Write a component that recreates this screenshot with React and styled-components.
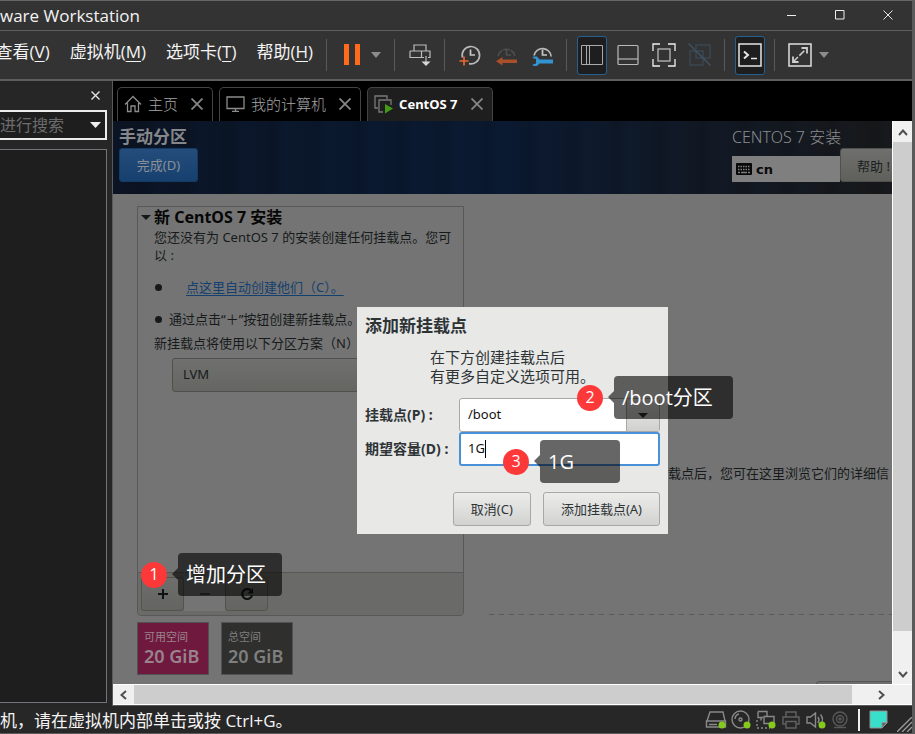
import React from "react";
import styled, { createGlobalStyle, css } from "styled-components";

const Global = createGlobalStyle`
  *, *::before, *::after { box-sizing: border-box; }
  body { margin: 0; background: #2a2a2a; }
  button, input, select { font: inherit; color: inherit; margin: 0; }
  button { padding: 0; border: 0; background: none; cursor: pointer; }
  svg { display: block; flex: none; }
`;

const uiFont = `"Open Sans", "Noto Sans CJK SC", sans-serif`;
const guestFont = `"Noto Sans", "Noto Sans CJK SC", sans-serif`;

const Window = styled.div`
  min-height: 100vh;
  display: flex;
  flex-direction: column;
  overflow: hidden;
  font-family: ${uiFont};
  color: #f4f4f4;
  background: #262626;
  border-top: 1px solid #666;
  border-right: 3px solid #5a5a5a;
  border-bottom: 1px solid #5a5a5a;
`;

/* ---------- title bar and toolbar ---------- */

const TitleBar = styled.header`
  height: 30px;
  display: flex;
  align-items: center;
  justify-content: space-between;
  background: #333;
  border-bottom: 1px solid #5e5e5e;
`;
const Title = styled.h1`
  margin: 0;
  font-size: 17px;
  line-height: 28px;
  font-weight: 400;
  white-space: nowrap;
`;
const WindowControls = styled.div`
  display: flex;
  padding-bottom: 2px;
`;
const WindowButton = styled.button`
  width: 48px;
  height: 27px;
  display: grid;
  place-items: center;
`;

const Toolbar = styled.div`
  height: 50px;
  display: flex;
  align-items: center;
  background: #333;
  border-bottom: 2px solid #5e5e5e;
`;
const MenuBar = styled.nav`
  width: 320px;
  flex: none;
  height: 48px;
  padding: 0 7px 6px 0;
  display: flex;
  align-items: center;
  justify-content: flex-end;
  gap: 20px;
  overflow: hidden;
`;
const MenuButton = styled.button`
  flex: none;
  font-size: 17px;
  line-height: 24px;
  white-space: nowrap;
  u { text-underline-offset: 3px; text-decoration-thickness: 1px; }
`;
const Separator = styled.span`
  width: 1px;
  height: 32px;
  margin: 0 7px 0 6px;
  flex: none;
  background: #5a5a5a;
`;
const Tool = styled.button`
  width: ${(p) => (p.$pressed ? 30 : 36)}px;
  height: 39px;
  margin: 0 ${(p) => (p.$pressed ? 3 : 0)}px;
  flex: none;
  display: grid;
  place-items: center;
  ${(p) =>
    p.$pressed &&
    css`
      background: #1e1e1e;
      border: 1px solid #26608f;
      border-radius: 3px;
    `}
`;
const ToolMenu = styled.button`
  width: 12px;
  height: 32px;
  margin-right: ${(p) => (p.$last ? 0 : 6)}px;
  flex: none;
  display: grid;
  place-items: center;
`;

/* ---------- body ---------- */

const Body = styled.div`
  flex: 1;
  display: flex;
`;
const Sidebar = styled.aside`
  width: 112px;
  flex: none;
  display: flex;
  flex-direction: column;
  padding: 0 5px 3px 0;
  background: #262626;
`;
const SidebarTop = styled.div`
  height: 29px;
  display: flex;
  justify-content: flex-end;
  align-items: center;
`;
const SidebarClose = styled.button`
  width: 24px;
  height: 28px;
  display: grid;
  place-items: center;
`;
const SearchBox = styled.div`
  height: 30px;
  display: flex;
  align-items: center;
  background: #1e1e1e;
  border: 2px solid #ececec;
  border-left: 0;
`;
const SearchInput = styled.input`
  flex: 1;
  min-width: 0;
  height: 26px;
  padding: 0;
  border: 0;
  outline: 0;
  background: transparent;
  font-size: 16px;
  &::placeholder { color: #6c6c6c; opacity: 1; }
`;
const SearchDrop = styled.button`
  width: 20px;
  height: 26px;
  display: grid;
  place-items: center;
`;
const Library = styled.div`
  flex: 1;
  margin-top: 9px;
  background: #1e1e1e;
  border: 1px solid #74747a;
  border-left: 0;
`;

const Main = styled.main`
  flex: 1;
  min-width: 0;
  display: flex;
  flex-direction: column;
  border-left: 1px solid #5a5a5a;
  border-bottom: 1px solid #5a5a5a;
`;
const TabStrip = styled.div`
  height: 40px;
  padding: 6px 4px 0;
  display: flex;
  gap: 6px;
  background: #000;
`;
const Tab = styled.div`
  height: 34px;
  padding: 0 7px 2px 6px;
  display: flex;
  align-items: center;
  gap: 6px;
  border: 1px solid #444;
  border-bottom: 0;
  border-radius: 5px 5px 0 0;
  background: ${(p) => (p.$active ? "#1e1e1e" : "#000")};
`;
const TabLabel = styled.button`
  display: flex;
  align-items: center;
  gap: 6px;
  font-size: ${(p) => (p.$active ? 13 : 15)}px;
  line-height: 24px;
  font-weight: ${(p) => (p.$active ? 700 : 300)};
  font-family: ${guestFont};
  color: ${(p) => (p.$active ? "#fff" : "#a5a5a5")};
  white-space: nowrap;
`;
const TabClose = styled.button`
  width: 16px;
  height: 20px;
  margin-left: 5px;
  display: grid;
  place-items: center;
`;

const Viewport = styled.div`
  flex: 1;
  display: flex;
`;
const Guest = styled.section`
  position: relative;
  flex: 1;
  min-width: 0;
  display: flex;
  flex-direction: column;
  overflow: hidden;
  font-family: ${guestFont};
  color: #161a1a;
  background: #747474;
`;

/* ---------- installer header ---------- */

const InstallerHeader = styled.div`
  height: 73px;
  flex: none;
  padding-left: 6px;
  display: flex;
  justify-content: space-between;
  background:
    repeating-linear-gradient(90deg, rgba(20, 50, 90, 0.05), transparent 17px, rgba(0, 0, 0, 0.08) 31px, rgba(20, 50, 90, 0.05) 43px),
    linear-gradient(90deg, #0b1322 0%, #0a182d 30%, #0a1930 50%, #111824 75%, #171819 100%);
`;
const HeaderLeft = styled.div`
  display: flex;
  flex-direction: column;
  align-items: flex-start;
  padding-top: 4px;
`;
const PageTitle = styled.h2`
  margin: 0;
  font-size: 17px;
  line-height: 23px;
  font-weight: 700;
  color: #85878a;
`;
const DoneButton = styled.button`
  width: 79px;
  height: 34px;
  padding-bottom: 2px;
  border: 1px solid #153a63;
  border-radius: 3px;
  background: linear-gradient(#254d7b, #16406f);
  font-size: 13px;
  color: #8b9097;
`;
const HeaderRight = styled.div`
  width: 160px;
  flex: none;
  padding-top: 6px;
`;
const ProductName = styled.div`
  font-size: 16px;
  line-height: 21px;
  font-weight: 300;
  color: #8a8c8f;
  white-space: nowrap;
`;
const HeaderTools = styled.div`
  display: flex;
  align-items: flex-end;
`;
const LayoutBox = styled.button`
  width: 108px;
  height: 26px;
  padding-left: 4px;
  flex: none;
  display: flex;
  align-items: center;
  gap: 4px;
  background: #7f7f7f;
  color: #0a0a0a;
  font: 700 13px "DejaVu Sans", sans-serif;
`;
const HelpButton = styled.button`
  width: 76px;
  height: 34px;
  padding-left: 16px;
  flex: none;
  border: 1px solid #50504e;
  border-radius: 3px;
  background: linear-gradient(#6f6f6d, #5f5f5c);
  color: #1b1f20;
  font-size: 13px;
  text-align: left;
  white-space: nowrap;
`;

/* ---------- partition page ---------- */

const Page = styled.div`
  flex: 1;
  display: flex;
  gap: 25px;
  padding: 12px 0 9px 24px;
`;
const LeftColumn = styled.div`
  width: 327px;
  flex: none;
  display: flex;
  flex-direction: column;
  gap: 6px;
`;
const PartitionPanel = styled.section`
  flex: 1;
  display: flex;
  flex-direction: column;
  border: 1px solid #585858;
  border-radius: 0 0 4px 4px;
`;
const PanelContent = styled.div`
  flex: 1;
  padding: 0 6px 0 16px;
  font-size: 13px;
  line-height: 18px;
`;
const PanelHeading = styled.h3`
  margin: 0 0 0 -13px;
  display: flex;
  align-items: center;
  gap: 3px;
  font-size: 16px;
  line-height: 21px;
  font-weight: 700;
  color: #060606;
`;
const Paragraph = styled.p`
  margin: 0;
`;
const Steps = styled.ul`
  list-style: none;
  margin: 14px 0 6px;
  padding: 0;
`;
const Step = styled.li`
  display: flex;
  align-items: center;
  gap: ${(p) => (p.$indented ? 24 : 7)}px;
  padding-left: 1px;
  white-space: nowrap;
  & + & { margin-top: 14px; }
  &::before {
    content: "";
    width: 7px;
    height: 7px;
    border-radius: 50%;
    background: #16191a;
  }
`;
const StepLink = styled.a`
  color: #14406f;
  text-underline-offset: 3px;
`;
const SchemeSelect = styled.select`
  display: block;
  width: 274px;
  height: 34px;
  margin: 6px 0 0 18px;
  padding: 0 10px 2px;
  appearance: none;
  border: 1px solid #4f4f4d;
  border-radius: 3px;
  background: linear-gradient(#70706e, #656562);
  font-size: 13px;
`;
const PanelActions = styled.div`
  height: 43px;
  padding: 4px 3px;
  display: flex;
  background: #6a6a68;
  border-top: 1px solid #585858;
  border-radius: 0 0 4px 4px;
`;
const PanelAction = styled.button`
  width: ${(p) => (p.disabled ? 41 : 43)}px;
  height: 34px;
  display: grid;
  place-items: center;
  background: ${(p) => (p.disabled ? "#747474" : "linear-gradient(#6e6e6c, #646461)")};
  border: ${(p) => (p.disabled ? 0 : 1)}px solid #53534f;
  border-radius: ${(p) => (p.disabled ? 0 : 3)}px;
`;
const SpaceTiles = styled.div`
  display: flex;
  gap: 12px;
`;
const SpaceTile = styled.div`
  width: 72px;
  height: 53px;
  padding: 5px 0 0 6px;
  border: 1px solid #525252;
  background: ${(p) => (p.$available ? "#70193f" : "#2f2f2d")};
  color: ${(p) => (p.$available ? "#99838d" : "#7f7f7f")};
  font-size: 11px;
  line-height: 18px;
  white-space: nowrap;
  strong { display: block; font: 600 18px/20px ${guestFont}; }
`;
const RightColumn = styled.div`
  flex: 1;
  min-width: 0;
  display: flex;
  flex-direction: column;
`;
const EmptyState = styled.div`
  flex: 1;
  padding: 124px 3px 0 0;
  display: flex;
  align-items: center;
  justify-content: flex-end;
  background: repeating-linear-gradient(90deg, #5a5a5a 0 5px, transparent 5px 10px) left bottom / 100% 1px no-repeat;
  font-size: 13px;
  line-height: 18px;
  white-space: nowrap;
`;
const ResetArea = styled.div`
  height: 60px;
  display: flex;
  justify-content: flex-end;
  align-items: flex-end;
`;
const ResetButton = styled.button`
  width: 80px;
  height: 34px;
  margin: 0 -4px -40px 0;
  flex: none;
  border: 1px solid #555;
  border-radius: 3px;
  background: #6e6e6c;
`;

/* ---------- dialog ---------- */

const Dialog = styled.form`
  position: absolute;
  left: 244px;
  top: 186px;
  width: 311px;
  padding: 7px 8px 8px;
  background: #e8e8e6;
  color: #2e3436;
`;
const DialogTitle = styled.h2`
  margin: 0;
  font-size: 17px;
  line-height: 23px;
  font-weight: 700;
`;
const DialogText = styled.p`
  margin: 11px 0 12px 65px;
  font-size: 15px;
  line-height: 19px;
`;
const FormGrid = styled.div`
  display: grid;
  grid-template-columns: 94px 1fr;
  align-items: center;
`;
const FormLabel = styled.label`
  font-size: 14px;
  line-height: 20px;
  font-weight: 700;
  white-space: nowrap;
`;
const Combo = styled.div`
  height: 34px;
  display: flex;
  border: 1px solid #a8a8a6;
  border-radius: 3px;
  background: #fff;
`;
const SizeField = styled.div`
  height: 34px;
  display: flex;
  align-items: center;
  border: 2px solid #4a90d9;
  border-radius: 3px;
  background: #fff;
`;
const FieldInput = styled.input`
  width: ${(p) => (p.$short ? 24 : 166)}px;
  min-width: 0;
  padding: 0 0 2px ${(p) => (p.$short ? 7 : 8)}px;
  border: 0;
  outline: 0;
  background: transparent;
  caret-color: transparent;
  font-size: 13px;
  color: #111;
`;
const Caret = styled.span`
  width: 1px;
  height: 18px;
  background: #000;
`;
const ComboButton = styled.button`
  width: 33px;
  margin-left: auto;
  display: grid;
  place-items: center;
  border-left: 1px solid #a8a8a6;
  background: linear-gradient(#ececeb, #d0d0ce);
`;
const DialogActions = styled.div`
  margin-top: 26px;
  display: flex;
  justify-content: flex-end;
  gap: 12px;
`;
const DialogButton = styled.button`
  height: 34px;
  padding: 0 17px 2px;
  border: 1px solid #a8a8a6;
  border-radius: 3px;
  background: linear-gradient(#ececeb, #d2d2d0);
  font-size: 13px;
`;

/* ---------- annotations over the guest ---------- */

const Annotation = styled.div`
  position: absolute;
  left: ${(p) => p.$x}px;
  top: ${(p) => p.$y}px;
  display: flex;
  align-items: center;
  gap: 11px;
  color: #fff;
  font-family: ${uiFont};
`;
const Marker = styled.span`
  width: 26px;
  height: 26px;
  border-radius: 50%;
  background: #fd3838;
  font-size: 16px;
  line-height: 24px;
  text-align: center;
`;
const Callout = styled.span`
  position: relative;
  min-width: ${(p) => p.$width}px;
  height: 43px;
  padding: 0 8px;
  border-radius: 4px;
  background: rgba(0, 0, 0, 0.6);
  font-size: 20px;
  line-height: 43px;
  white-space: nowrap;
  &::before {
    content: "";
    position: absolute;
    left: -6px;
    top: 15px;
    border: solid transparent;
    border-width: 6px 6px 6px 0;
    border-right-color: rgba(0, 0, 0, 0.6);
  }
`;

/* ---------- scroll bars ---------- */

const ScrollBar = styled.div`
  flex: none;
  display: flex;
  background: #f0f0f0;
  ${(p) =>
    p.$vertical
      ? css`width: 20px; flex-direction: column; border-left: 1px solid #fff;`
      : css`height: 21px; border-top: 1px solid #fff; border-bottom: 1px solid #fff;`}
`;
const ScrollButton = styled.button`
  width: ${(p) => (p.$vertical ? 19 : 21)}px;
  height: ${(p) => (p.$vertical ? 21 : 19)}px;
  flex: none;
  display: grid;
  place-items: center;
`;
const ScrollThumb = styled.div`
  flex: 1;
  background: #cdcdcd;
  ${(p) => (p.$vertical ? css`margin-bottom: 32px;` : css`margin-right: 18px;`)}
`;
const ScrollCorner = styled.span`
  width: 21px;
`;

/* ---------- status bar ---------- */

const StatusBar = styled.footer`
  height: 27px;
  display: flex;
  align-items: center;
  background: #272727;
`;
const StatusText = styled.span`
  flex: 1;
  padding-top: 2px;
  font-size: 17px;
  line-height: 24px;
  white-space: nowrap;
`;
const Devices = styled.div`
  display: flex;
  gap: 3px;
`;
const Device = styled.button`
  width: 22px;
  height: 22px;
  display: grid;
  place-items: center;
`;
const StatusDivider = styled.span`
  width: 2px;
  height: 22px;
  margin: 0 9px 0 6px;
  background: #f0f0f0;
`;
const Grip = styled.span`
  margin: 10px 0 0 9px;
`;

/* ---------- icons ---------- */

const Svg = ({ w, h = w, color = "#b9b9b9", sw = 1, children }) => (
  <svg width={w} height={h} viewBox={`0 0 ${w} ${h}`} fill="none" stroke={color} strokeWidth={sw} aria-hidden="true">
    {children}
  </svg>
);
const Down = ({ color = "#8d8d8d", w = 10, h = 6 }) => (
  <Svg w={w} h={h} color="none"><path d={`M0 0H${w}L${w / 2} ${h}Z`} fill={color} /></Svg>
);
const Cross = ({ size = 10, color = "#e8e8e8", sw = 1 }) => (
  <Svg w={size} color={color} sw={sw}><path d={`M.5 .5L${size - 0.5} ${size - 0.5}M${size - 0.5} .5L.5 ${size - 0.5}`} /></Svg>
);
const Chevron = ({ d, w = 10, h = 10 }) => <Svg w={w} h={h} color="#505050" sw={2}><path d={d} /></Svg>;
const Dot = () => <circle cx="17" cy="16" r="3.5" fill="#84c91c" stroke="none" />;

const PauseIcon = () => (
  <Svg w={16} h={22} color="none"><path d="M0 0h5v21H0zM11 0h5v21h-5z" fill="#ff6a1c" /></Svg>
);
const SendIcon = () => (
  <Svg w={22} h={24} sw={1.2} color="#bcbcbc">
    <path d="M5 8V2h12v6M1 8h20v6.500h-2M15 14.500H1V8M12.500 8v6.500" />
    <path d="M17 13v7" sw={2} /><path d="M12.500 18.500h9L17 23z" fill="#d5d5d5" stroke="none" />
  </Svg>
);
const ClockAdd = () => (
  <Svg w={22} sw={1.7}>
    <path d="M3.500 13.500A8.700 8.700 0 1 1 10 19.700" /><path d="M11.500 5.500v5.500H16" stroke="#c8c8c8" />
    <path d="M5 12.500v9M.5 17h9" stroke="#e8682d" />
  </Svg>
);
const ClockBack = () => (
  <Svg w={22} color="#505050" sw={1.5}>
    <path d="M3 12A8.700 8.700 0 0 1 20 12" strokeDasharray="7 1" /><path d="M11.500 5.500v5.500H16" />
    <path d="M1 17.200l6.500-4.200v2.500H22V19H7.500v2.500z" fill="#a9502a" stroke="none" />
  </Svg>
);
const ClockManage = () => (
  <Svg w={22} sw={1.7}>
    <path d="M3 11.500A8.700 8.700 0 0 1 20.200 12.500" /><path d="M11.500 5.500v5.500H16" stroke="#c8c8c8" />
    <path d="M2.500 12.500h3.500l2.500 3H22v4H8.500L6 22H2.500l-1-1.500L5 19.500v-4.500l-3.500-1z" fill="#3293d1" stroke="none" />
  </Svg>
);
const SplitIcon = () => <Svg w={22} color="#aaa"><path d="M.5 1.500h21v19H.5zM8.500 1.500v19M5.500 1.500v19" /></Svg>;
const ConsoleIcon = () => <Svg w={22}><rect x="1" y="1.500" width="20" height="19" rx="1" strokeWidth="1.200" /><path d="M1 15h20" strokeWidth="1.200" /></Svg>;
const FullIcon = () => (
  <Svg w={24} sw={1.300}>
    <path d="M1 8V1h7M16 1h7v7M23 16v7h-7M8 23H1v-7" stroke="#efefef" /><rect x="6" y="6" width="12" height="12" />
  </Svg>
);
const UnityIcon = () => (
  <Svg w={24} color="#394752" sw={1.500}>
    <path d="M8 6V2h14v13h-6M2 8h13v14H2zM8 9v6h6" /><path d="M.5 .5l22 22" stroke="#3e5263" />
  </Svg>
);
const TerminalIcon = () => (
  <Svg w={24} color="#e6e6e6" sw={1.500}><path d="M1 1h22v22H1z" /><path d="M6 8.500l4 3.500-4 3.500" strokeWidth="2" /><path d="M13 15.500h6" /></Svg>
);
const ExpandIcon = () => (
  <Svg w={24} color="#cfcfcf" sw={1.500}>
    <path d="M1 1h22v22H1z" stroke="#e0e0e0" /><path d="M5 19L19 5" strokeDasharray="7 2" /><path d="M13.500 5H19v5.500M5 13.500V19h5.500" strokeWidth="1.800" />
  </Svg>
);
const HomeIcon = () => (
  <Svg w={18} color="#8c8c8c" sw={1.300}><path d="M1 9.500L9 1.500l8 8M3.500 8v8.500H7V11h4v5.500h3.500V8" /></Svg>
);
const MonitorIcon = () => (
  <Svg w={19} h={18} color="#8c8c8c" sw={1.300}><path d="M1 2h17v11.500H1zM9.500 13.500v2.500M6 16.400h7" /></Svg>
);
const VmIcon = () => (
  <Svg w={19} h={20} color="#7a7a7a" sw={1.300}>
    <path d="M4 14H1V2h12v3" /><path d="M9 18H5V6h12v5" />
    <path d="M11 10l8 4.500-8 5z" fill="#449a17" stroke="none" />
  </Svg>
);
const KeyboardIcon = () => (
  <Svg w={16} h={12} color="none">
    <rect width="16" height="12" rx="1" fill="#080808" />
    <path d="M2 3.500h12M2 6.500h12" stroke="#7f7f7f" strokeWidth="1.500" strokeDasharray="1.500 1" />
    <path d="M2 9.500h2M5 9.500h6M12 9.500h2" stroke="#7f7f7f" strokeWidth="1.500" />
  </Svg>
);

const DriveIcon = () => <Svg w={22} color="#898989" sw={1.400}><path d="M2 12L5 3h13l2 9M1.500 12h19v6h-19zM4 15.500h8" /><Dot /></Svg>;
const DiscIcon = () => (
  <Svg w={22} color="#898989" sw={1.400}>
    <circle cx="10.500" cy="10.500" r="8.500" /><circle cx="10.500" cy="10.500" r="1.500" /><path d="M5 10a5.500 5.500 0 0 1 4-5" /><Dot />
  </Svg>
);
const NetworkIcon = () => (
  <Svg w={22} color="#898989" sw={1.400}>
    <path d="M3 2.500h9v5M3 2.500v6h5M9 7.500h10v7H9zM6 8.500v3" /><path d="M2 11v8h13" strokeDasharray="2 2" /><Dot />
  </Svg>
);
const PrinterIcon = () => (
  <Svg w={22} color="#626262" sw={1.400}><path d="M6 8V3h10v5M6 15H3V8h16v7h-3M6 12.500h10V19H6z" /></Svg>
);
const SoundIcon = () => (
  <Svg w={22} color="#898989" sw={1.400}>
    <path d="M2 8v6h3.500l5 4V4l-5 4zM13 8q2 3 0 6M15.500 5.500q4 5 0 10" /><Dot />
  </Svg>
);
const CameraIcon = () => (
  <Svg w={22} color="#585858" sw={1.400}>
    <circle cx="10" cy="10" r="7" /><circle cx="10" cy="10" r="3.500" /><circle cx="10" cy="10" r="1" /><path d="M4 18.500h12" />
  </Svg>
);
const NoteIcon = () => (
  <Svg w={19} h={19} color="#9b8f90">
    <path d="M1 1h17v12l-5 5H1z" fill="#38e0cb" /><path d="M18 12.500h-5V18z" fill="#3d6f6b" />
  </Svg>
);
const GripIcon = () => <Svg w={15} h={15} color="#9a9a9a" sw={1.400}><path d="M0 15L15 0M5 15L15 5M10 15l5-5" /></Svg>;

const menus = [["查看", "V"], ["虚拟机", "M"], ["选项卡", "T"], ["帮助", "H"]];
const devices = [
  ["硬盘", DriveIcon], ["光驱", DiscIcon], ["网络适配器", NetworkIcon],
  ["打印机", PrinterIcon], ["声卡", SoundIcon], ["摄像头", CameraIcon],
];
const notes = [
  { n: 1, x: 28, y: 432, text: "增加分区", width: 104 },
  { n: 2, x: 464, y: 255, text: "/boot分区", width: 119 },
  { n: 3, x: 390, y: 319, text: "1G", width: 80 },
];

function GuestTab({ icon, label, active }) {
  return (
    <Tab $active={active}>
      <TabLabel $active={active}>{icon}{label}</TabLabel>
      <TabClose aria-label="关闭标签"><Cross size={12} color="#858585" sw={1.8} /></TabClose>
    </Tab>
  );
}

function MountDialog() {
  return (
    <Dialog onSubmit={(e) => e.preventDefault()}>
      <DialogTitle>添加新挂载点</DialogTitle>
      <DialogText>在下方创建挂载点后<br />有更多自定义选项可用。</DialogText>
      <FormGrid>
        <FormLabel htmlFor="mount">挂载点(P) :</FormLabel>
        <Combo>
          <FieldInput id="mount" defaultValue="/boot" />
          <ComboButton type="button" aria-label="选择挂载点"><Down color="#2e3436" w={10} h={5} /></ComboButton>
        </Combo>
        <FormLabel htmlFor="capacity">期望容量(D) :</FormLabel>
        <SizeField>
          <FieldInput id="capacity" $short defaultValue="1G" />
          <Caret />
        </SizeField>
      </FormGrid>
      <DialogActions>
        <DialogButton type="button">取消(C)</DialogButton>
        <DialogButton type="submit">添加挂载点(A)</DialogButton>
      </DialogActions>
    </Dialog>
  );
}

function Installer() {
  return (
    <Guest>
      <InstallerHeader>
        <HeaderLeft>
          <PageTitle>手动分区</PageTitle>
          <DoneButton>完成(D)</DoneButton>
        </HeaderLeft>
        <HeaderRight>
          <ProductName>CENTOS 7 安装</ProductName>
          <HeaderTools>
            <LayoutBox><KeyboardIcon />cn</LayoutBox>
            <HelpButton>帮助 !</HelpButton>
          </HeaderTools>
        </HeaderRight>
      </InstallerHeader>
      <Page>
        <LeftColumn>
          <PartitionPanel>
            <PanelContent>
              <PanelHeading><Down color="#16191a" w={10} h={5} />新 CentOS 7 安装</PanelHeading>
              <Paragraph>您还没有为 CentOS 7 的安装创建任何挂载点。您可以 :</Paragraph>
              <Steps>
                <Step $indented><StepLink href="#auto">点这里自动创建他们（C）。</StepLink></Step>
                <Step>通过点击“＋”按钮创建新挂载点。</Step>
              </Steps>
              <label htmlFor="scheme">新挂载点将使用以下分区方案（N）</label>
              <SchemeSelect id="scheme"><option>LVM</option></SchemeSelect>
            </PanelContent>
            <PanelActions>
              <PanelAction aria-label="添加"><Svg w={12} color="#101314" sw={2}><path d="M6 1v10M1 6h10" /></Svg></PanelAction>
              <PanelAction aria-label="删除" disabled><Svg w={12} color="#3e4041" sw={2}><path d="M1 6h10" /></Svg></PanelAction>
              <PanelAction aria-label="刷新">
                <Svg w={14} color="#101314" sw={2.2}><path d="M10.500 3.200A5 5 0 1 0 12 8.500" /><path d="M13 1v5.500H7.500z" fill="#101314" stroke="none" /></Svg>
              </PanelAction>
            </PanelActions>
          </PartitionPanel>
          <SpaceTiles>
            <SpaceTile $available>可用空间<strong>20 GiB</strong></SpaceTile>
            <SpaceTile>总空间<strong>20 GiB</strong></SpaceTile>
          </SpaceTiles>
        </LeftColumn>
        <RightColumn>
          <EmptyState>载点后，您可在这里浏览它们的详细信</EmptyState>
          <ResetArea><ResetButton aria-label="重置" /></ResetArea>
        </RightColumn>
      </Page>
      <MountDialog />
      {notes.map((a) => (
        <Annotation key={a.n} $x={a.x} $y={a.y}>
          <Marker>{a.n}</Marker>
          <Callout $width={a.width}>{a.text}</Callout>
        </Annotation>
      ))}
    </Guest>
  );
}

export default function App() {
  return (
    <>
      <Global />
      <Window>
        <TitleBar>
          <Title>ware Workstation</Title>
          <WindowControls>
            <WindowButton aria-label="最小化"><Svg w={10} color="#eee"><path d="M0 5.500h9" /></Svg></WindowButton>
            <WindowButton aria-label="最大化"><Svg w={10} color="#eee"><path d="M.5 .5h8.500v8.500H.5z" /></Svg></WindowButton>
            <WindowButton aria-label="关闭"><Cross size={10} /></WindowButton>
          </WindowControls>
        </TitleBar>
        <Toolbar>
          <MenuBar>
            {menus.map(([name, key]) => (
              <MenuButton key={key}>{name}(<u>{key}</u>)</MenuButton>
            ))}
          </MenuBar>
          <Separator />
          <Tool aria-label="暂停"><PauseIcon /></Tool>
          <ToolMenu aria-label="电源选项"><Down /></ToolMenu>
          <Separator />
          <Tool aria-label="发送按键"><SendIcon /></Tool>
          <Separator />
          <Tool aria-label="拍摄快照"><ClockAdd /></Tool>
          <Tool aria-label="恢复快照"><ClockBack /></Tool>
          <Tool aria-label="管理快照"><ClockManage /></Tool>
          <Separator />
          <Tool $pressed aria-label="显示库"><SplitIcon /></Tool>
          <Tool aria-label="缩略图栏"><ConsoleIcon /></Tool>
          <Tool aria-label="全屏"><FullIcon /></Tool>
          <Tool aria-label="Unity"><UnityIcon /></Tool>
          <Separator />
          <Tool $pressed aria-label="控制台"><TerminalIcon /></Tool>
          <Separator />
          <Tool aria-label="自由拉伸"><ExpandIcon /></Tool>
          <ToolMenu $last aria-label="拉伸选项"><Down /></ToolMenu>
        </Toolbar>
        <Body>
          <Sidebar>
            <SidebarTop><SidebarClose aria-label="关闭库"><Cross size={9} sw={1.3} /></SidebarClose></SidebarTop>
            <SearchBox>
              <SearchInput aria-label="搜索" placeholder="进行搜索" />
              <SearchDrop aria-label="搜索选项"><Down color="#eee" w={11} h={6} /></SearchDrop>
            </SearchBox>
            <Library />
          </Sidebar>
          <Main>
            <TabStrip>
              <GuestTab icon={<HomeIcon />} label="主页" />
              <GuestTab icon={<MonitorIcon />} label="我的计算机" />
              <GuestTab icon={<VmIcon />} label="CentOS 7" active />
            </TabStrip>
            <Viewport>
              <Installer />
              <ScrollBar $vertical>
                <ScrollButton $vertical aria-label="向上"><Chevron d="M1 8l4-4.500L9 8" /></ScrollButton>
                <ScrollThumb $vertical />
                <ScrollButton $vertical aria-label="向下"><Chevron d="M1 3l4 4.500L9 3" /></ScrollButton>
              </ScrollBar>
            </Viewport>
            <ScrollBar>
              <ScrollButton aria-label="向左"><Chevron d="M7 1L2.500 5L7 9" /></ScrollButton>
              <ScrollThumb />
              <ScrollButton aria-label="向右"><Chevron d="M3 1l4.500 4L3 9" /></ScrollButton>
              <ScrollCorner />
            </ScrollBar>
          </Main>
        </Body>
        <StatusBar>
          <StatusText>机，请在虚拟机内部单击或按 Ctrl+G。</StatusText>
          <Devices>
            {devices.map(([name, Icon]) => (
              <Device key={name} aria-label={name}><Icon /></Device>
            ))}
          </Devices>
          <StatusDivider />
          <NoteIcon />
          <Grip><GripIcon /></Grip>
        </StatusBar>
      </Window>
    </>
  );
}
